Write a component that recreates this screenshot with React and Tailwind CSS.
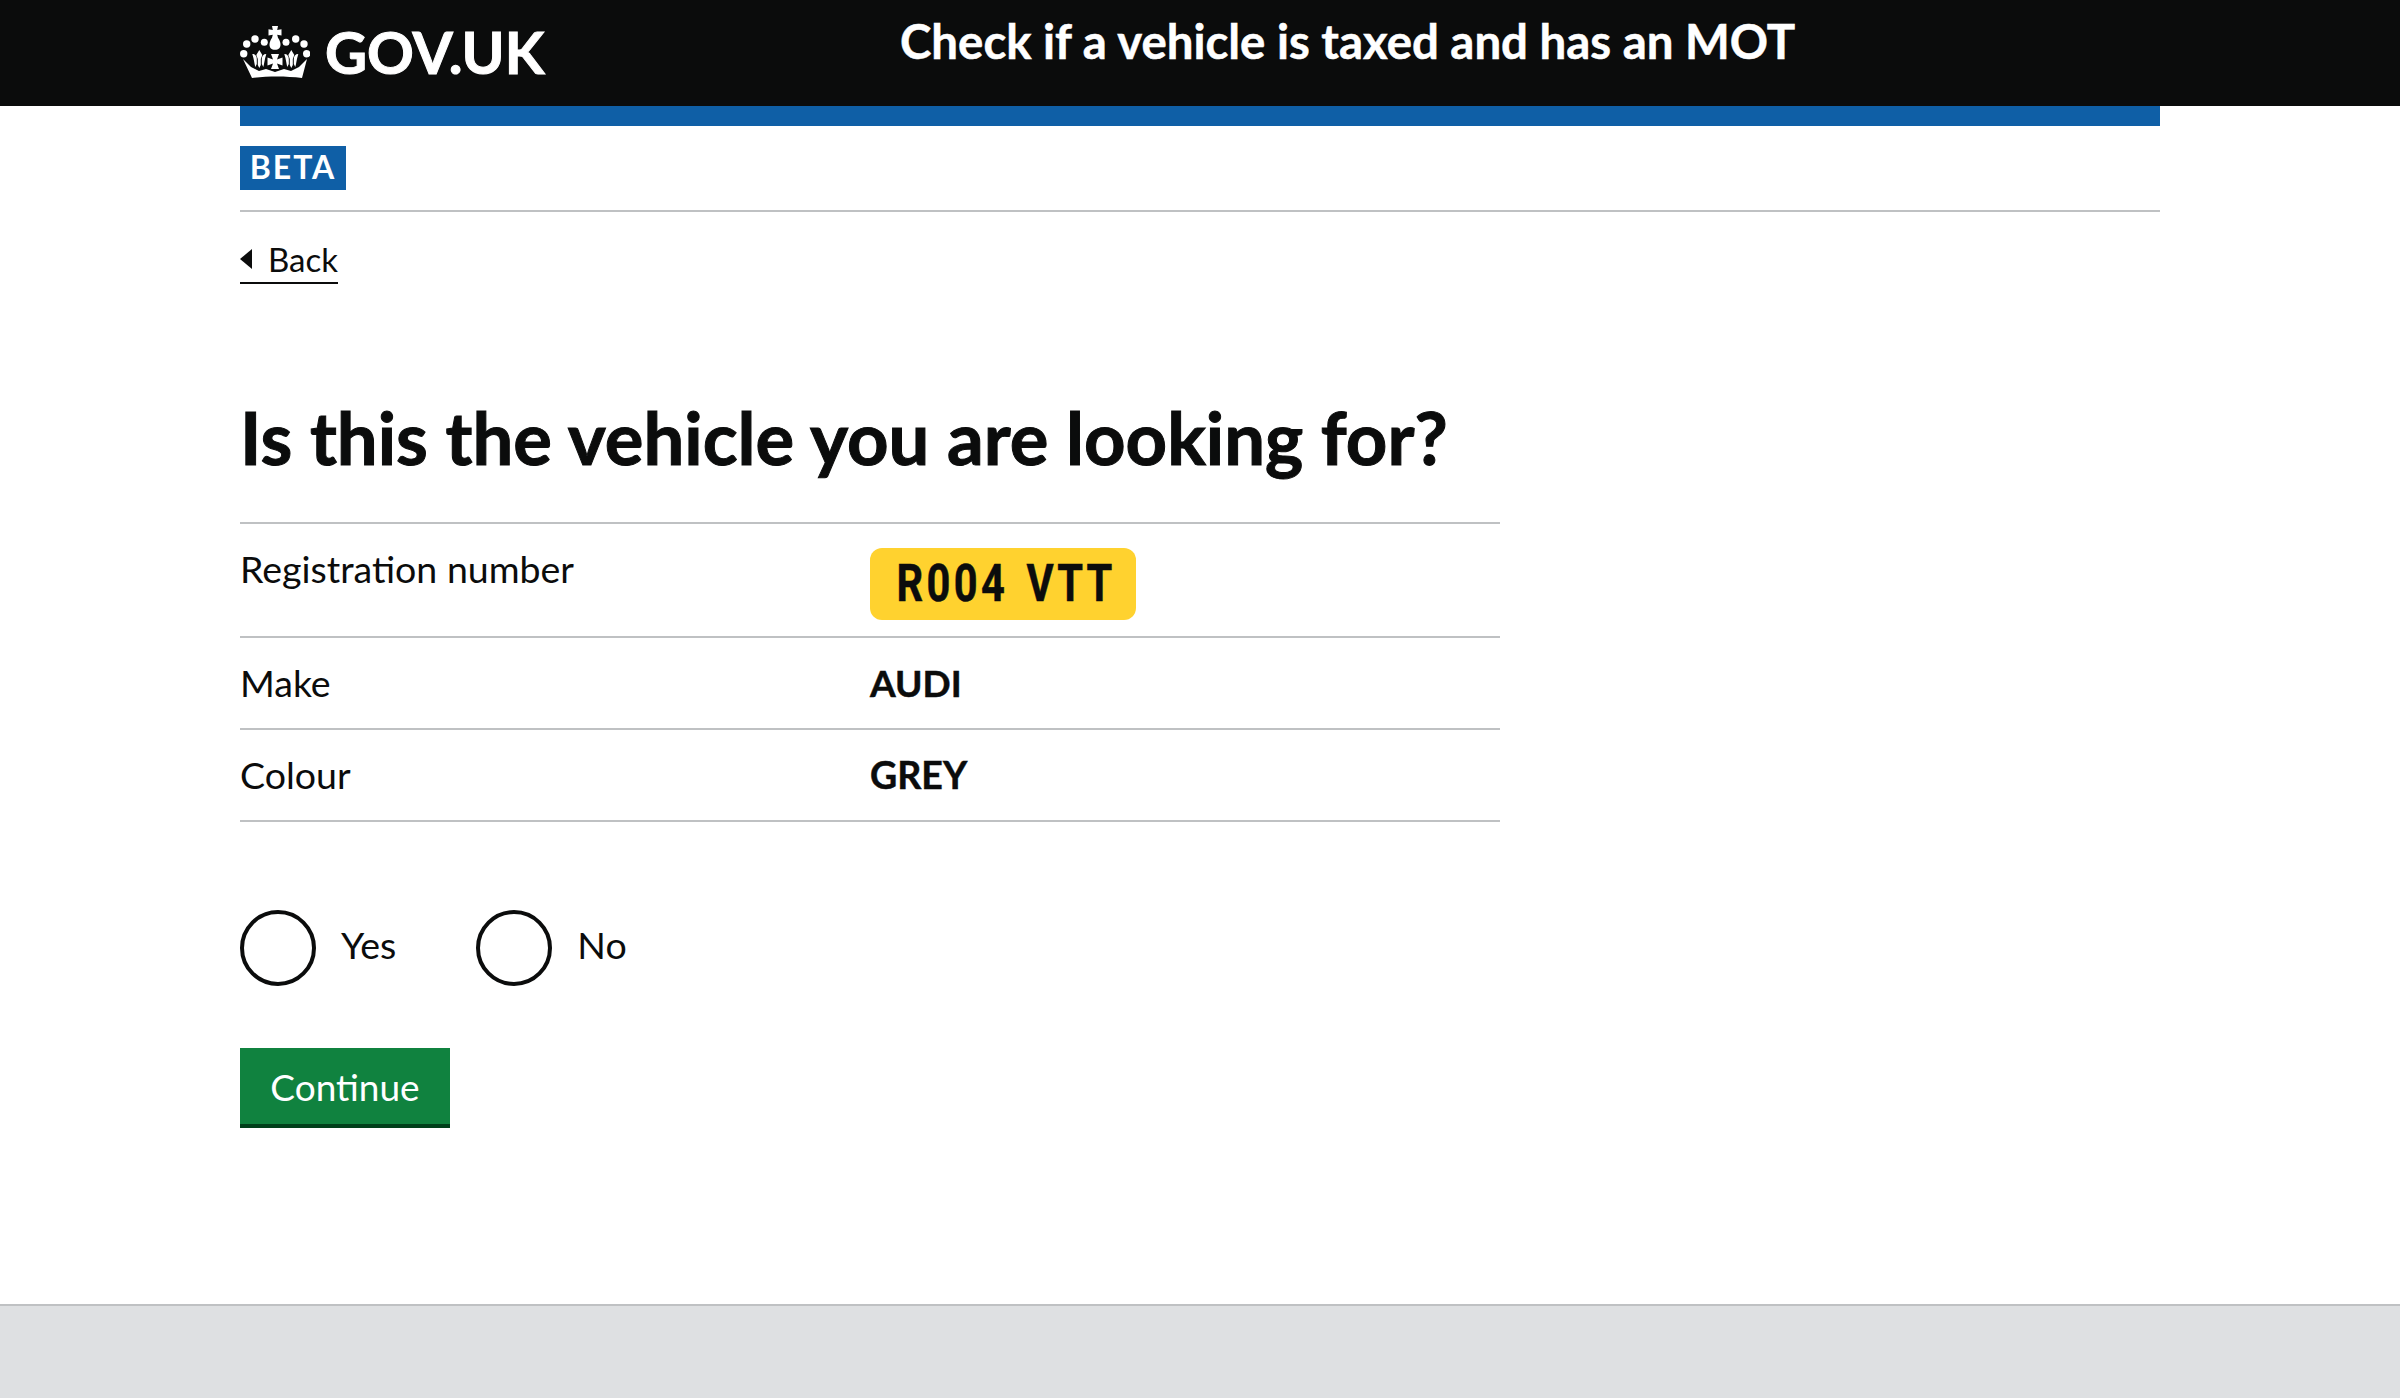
import React from 'react';

const FONT = "font-['Lato',sans-serif]";

function Fleur({ x }) {
  return (
    <g transform={`translate(${x} 0)`}>
      <path d="M0 24l3 5-1.500 4v6l-1.500 3-1.500-3v-6L-3 29z" />
      <path d="M-7 28c3 0 4.500 2 4.500 5v5l-1.500 3c-1-3-1-7-3-13zM7 28c-3 0-4.500 2-4.500 5v5l1.500 3c1-3 1-7 3-13z" />
    </g>
  );
}

function Crown() {
  return (
    <svg viewBox="0 0 70 52" className="w-[70px] h-[52px] fill-white" aria-hidden="true">
      {/* cross + orb */}
      <path d="M32 0h6l-.8 4 4.300-.8v6.300l-4.300-.8.800 3c2 3 2.500 5 2.500 7 0 3-2 5-5.500 5s-5.500-2-5.500-5c0-2 .5-4 2.500-7l.8-3-4.300.8V3.200l4.300.8z" />
      <circle cx="3.700" cy="27.700" r="3.700" />
      <circle cx="6.700" cy="18" r="3.700" />
      <circle cx="15" cy="13" r="3.700" />
      <circle cx="24.300" cy="16.300" r="3.500" />
      <circle cx="46" cy="16.300" r="3.500" />
      <circle cx="55.700" cy="13" r="3.700" />
      <circle cx="64" cy="18" r="3.700" />
      <circle cx="66.700" cy="27.700" r="3.700" />
      <Fleur x={19.300} />
      <Fleur x={51.300} />
      {/* cross patee in the middle */}
      <path d="M31 28h8l-2 5.500 5.500-2v8l-5.500-2 2 5.500h-8l2-5.500-5.500 2v-8l5.500 2z" />
      {/* band */}
      <path d="M3 33l8 8 8 4 7-2 9 3 9-3 7 2 8-4 8-8-5 19c-16-2-34-2-50 0z" />
    </svg>
  );
}

function Row({ label, children, top }) {
  return (
    <div className={`flex border-b-2 border-[#bfc1c3] ${top ? 'border-t-2 h-[116px] pt-[24px]' : 'h-[92px] items-center'}`}>
      <div className={`w-[630px] text-[37.500px] leading-[46px] text-[#0b0c0c] ${top ? '-mt-[2px]' : ''}`}>{label}</div>
      <div>{children}</div>
    </div>
  );
}

function Radio({ label }) {
  return (
    <label className="flex items-center">
      <span className="w-[76px] h-[76px] rounded-full border-[4px] border-[#0b0c0c]" />
      <span className="ml-[25px] text-[37.500px] leading-[46px] text-[#0b0c0c] -mt-[6px]">{label}</span>
    </label>
  );
}

export default function App() {
  return (
    <div className={`${FONT} min-h-[1398px] flex flex-col bg-white text-[#0b0c0c]`}>
      <header className="h-[106px] bg-[#0b0c0c] px-[240px] flex items-start">
        <div className="flex items-center w-[660px] h-[106px] pb-[3px]">
          <Crown />
          <span className="ml-[15px] text-[58px] leading-none font-bold text-white [-webkit-text-stroke:1px_#ffffff]">GOV.UK</span>
        </div>
        <div className="mt-[13px] text-[47.400px] leading-[56px] font-bold text-white [-webkit-text-stroke:0.5px_#ffffff]">Check if a vehicle is taxed and has an MOT</div>
      </header>

      <main className="flex-1 px-[240px]">
        <div className="h-[20px] bg-[#0f5fa6]" />
        <div className="pt-[20px] pb-[20px] border-b-2 border-[#bfc1c3]">
          <span className="block w-[106px] h-[44px] bg-[#0f5fa6] text-white text-[32px] leading-[42px] font-bold text-center tracking-[2px]">BETA</span>
        </div>

        <a className="mt-[24px] inline-flex items-center h-[48px] border-b-2 border-[#0b0c0c] text-[33px] leading-[46px]">
          <span className="w-0 h-0 border-y-[10px] border-y-transparent border-r-[12px] border-r-[#0b0c0c] mr-[16px]" />
          Back
        </a>

        <h1 className="mt-[108px] text-[72.400px] leading-[90px] font-bold [-webkit-text-stroke:1px_#0b0c0c]">Is this the vehicle you are looking for?</h1>

        <div className="mt-[40px] w-[1260px]">
          <Row label="Registration number" top>
            <div className="w-[266px] h-[72px] rounded-[12px] bg-[#ffd22f] flex items-center justify-center">
              <span className="ml-[6px] font-['Roboto',sans-serif] font-bold text-[52px] tracking-[4.200px] [word-spacing:6px] leading-none whitespace-pre scale-x-[0.8] [-webkit-text-stroke:0.5px_#0b0c0c]">R004 VTT</span>
            </div>
          </Row>
          <Row label="Make"><span className="text-[37px] font-bold leading-[46px] [-webkit-text-stroke:0.5px_#0b0c0c]">AUDI</span></Row>
          <Row label="Colour"><span className="text-[37.500px] font-bold leading-[46px] [-webkit-text-stroke:0.5px_#0b0c0c]">GREY</span></Row>
        </div>

        <div className="mt-[88px] flex gap-[80px]">
          <Radio label="Yes" />
          <Radio label="No" />
        </div>

        <button className="mt-[62px] w-[210px] h-[80px] bg-[#10823f] border-b-[4px] border-[#00401a] text-white text-[37px] leading-none">Continue</button>
      </main>

      <footer className="h-[94px] bg-[#dee0e2] border-t-2 border-[#bfc1c3]" />
    </div>
  );
}
